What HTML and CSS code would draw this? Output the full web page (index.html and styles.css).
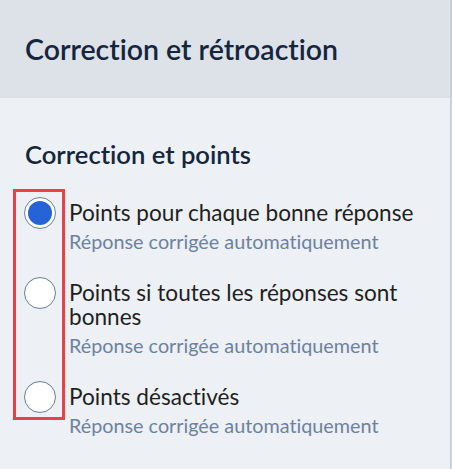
FILE: index.html
```html
<!DOCTYPE html>
<html lang="fr">
<head>
<meta charset="utf-8">
<link rel="stylesheet" href="styles.css">
</head>
<body>
<div class="panel">
  <header class="panel-header">
    <h1 class="panel-title">Correction et rétroaction</h1>
  </header>
  <section class="panel-body">
    <h2 class="section-title">Correction et points</h2>
    <div class="options">
      <div class="highlight"></div>
      <label class="option">
        <span class="radio checked"><span class="dot"></span></span>
        <span class="texts">
          <span class="label">Points pour chaque bonne réponse</span>
          <span class="sub">Réponse corrigée automatiquement</span>
        </span>
      </label>
      <label class="option">
        <span class="radio"></span>
        <span class="texts">
          <span class="label">Points si toutes les réponses sont bonnes</span>
          <span class="sub">Réponse corrigée automatiquement</span>
        </span>
      </label>
      <label class="option">
        <span class="radio"></span>
        <span class="texts">
          <span class="label">Points désactivés</span>
          <span class="sub">Réponse corrigée automatiquement</span>
        </span>
      </label>
    </div>
  </section>
</div>
</body>
</html>
```

FILE: styles.css
```css
* { box-sizing: border-box; }
html, body { margin: 0; padding: 0; }
body {
  width: 452px;
  height: 469px;
  overflow: hidden;
  font-family: "Lato", "Noto Sans", sans-serif;
  font-variant-ligatures: none;
  background: #edf0f5;
}
.panel {
  width: 452px;
  height: 469px;
  border-right: 2px solid #c9d0da;
  background: #edf0f5;
  display: flex;
  flex-direction: column;
}
.panel-header {
  flex: none;
  height: 98px;
  background: #dde1e8;
  display: flex;
  align-items: center;
  padding-left: 25px;
}
.panel-title {
  margin: 0;
  font-size: 28.5px;
  line-height: 34px;
  font-weight: 600;
  color: #14263e;
}
.panel-body {
  padding: 41px 10px 0 25px;
}
.section-title {
  margin: 0;
  font-size: 25.6px;
  font-weight: 600;
  color: #14263e;
  line-height: 30px;
}
.options {
  position: relative;
  margin-top: 28px;
  display: flex;
  flex-direction: column;
  gap: 25px;
}
.highlight {
  position: absolute;
  left: -12px;
  top: -8px;
  width: 52px;
  height: 231px;
  border: 3px solid #e84249;
  pointer-events: none;
}
.option {
  display: flex;
  align-items: flex-start;
  gap: 13px;
}
.radio {
  flex: none;
  width: 32px;
  height: 32px;
  margin-left: -1px;
  border-radius: 50%;
  border: 1px solid #6a7f99;
  background: #fff;
  display: flex;
  align-items: center;
  justify-content: center;
}
.dot {
  width: 24px;
  height: 24px;
  border-radius: 50%;
  background: #2563d6;
}
.texts {
  display: flex;
  flex-direction: column;
  padding-top: 4px;
}
.label {
  font-size: 22.6px;
  line-height: 24px;
  color: #1f1f1f;
}
.sub {
  margin-top: 5px;
  font-size: 19.8px;
  line-height: 22px;
  color: #6c82a0;
}
```
